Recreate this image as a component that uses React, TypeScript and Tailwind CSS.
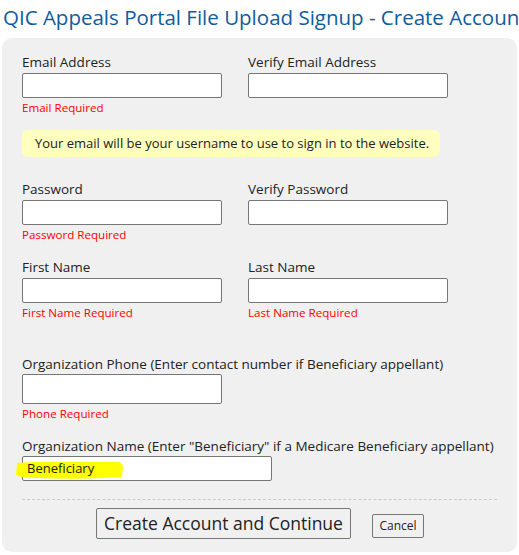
import React from "react";

const font = { fontFamily: '"Open Sans", "Noto Sans", sans-serif' };

function Field({ label, error, wide }: { label: string; error?: string; wide?: boolean }) {
  return (
    <div className="flex flex-col">
      <div className="text-[13.5px] leading-[18px] text-[#222]">{label}</div>
      <div className={`mt-[2px] h-[25px] ${wide ? "w-[250px]" : "w-[200px]"} border border-[#767676] rounded-[2px] bg-white`} />
      {error ? (
        <div className="mt-[2px] text-[11.6px] leading-[16px] text-[#ff0000]">{error}</div>
      ) : (
        <div className="mt-[2px] h-[16px]" />
      )}
    </div>
  );
}

export default function App() {
  return (
    <div className="w-[519px] h-[555px] overflow-hidden bg-white" style={font}>
      <h1 className="whitespace-nowrap pl-[3px] pt-[2px] text-[20.5px] leading-[30px] text-[#0e5c9e]">
        QIC Appeals Portal File Upload Signup - Create Account
      </h1>
      <div className="mt-[6px] mx-[2px] h-[514px] rounded-[10px] bg-[#f0f0f0] pl-[20px] pr-[20px] pt-[15px]">
        <div className="grid grid-cols-[226px_226px]">
          <Field label="Email Address" error="Email Required" />
          <Field label="Verify Email Address" />
        </div>
        <div className="mt-[14px] w-[418px] h-[27px] rounded-[6px] bg-[#ffffbe] pl-[13px] text-[13px] leading-[27px] text-[#222]">
          Your email will be your username to use to sign in to the website.
        </div>
        <div className="mt-[23px] grid grid-cols-[226px_226px]">
          <Field label="Password" error="Password Required" />
          <Field label="Verify Password" />
        </div>
        <div className="mt-[15px] grid grid-cols-[226px_226px]">
          <Field label="First Name" error="First Name Required" />
          <Field label="Last Name" error="Last Name Required" />
        </div>
        <div className="mt-[34px] flex flex-col">
          <div className="text-[13.5px] leading-[18px] text-[#222]">
            Organization Phone (Enter contact number if Beneficiary appellant)
          </div>
          <div className="mt-[1px] h-[30px] w-[200px] border border-[#767676] rounded-[2px] bg-white" />
          <div className="mt-[2px] text-[11.6px] leading-[16px] text-[#ff0000]">Phone Required</div>
        </div>
        <div className="mt-[15px] flex flex-col">
          <div className="text-[13.5px] leading-[18px] text-[#222] whitespace-nowrap">
            Organization Name (Enter "Beneficiary" if a Medicare Beneficiary appellant)
          </div>
          <div className="relative mt-[1px] h-[25px] w-[250px] border border-[#767676] rounded-[2px] bg-white">
            <svg className="absolute left-[-8px] top-[3px]" width="110" height="20" viewBox="0 0 110 20">
              <path
                d="M2 3 C20 1 60 2 104 2 L108 5 L107 17 C80 19 50 19 20 18 C10 18 4 17 1 15 Z"
                fill="#ffff00"
              />
            </svg>
            <div className="relative pl-[4px] text-[13px] leading-[23px] text-[#1a2200]">Beneficiary</div>
          </div>
        </div>
        <div className="mt-[18px] border-t border-dashed border-[#cccccc] w-[475px]" />
        <div className="mt-[8px] flex items-start">
          <button className="ml-[74px] h-[31px] w-[255px] border border-[#767676] rounded-[2px] bg-[#f0f0f0] text-[17.5px] leading-[29px] text-[#222]">
            Create Account and Continue
          </button>
          <button className="ml-[21px] mt-[6px] h-[24px] w-[52px] border border-[#767676] rounded-[2px] bg-[#f0f0f0] text-[12px] leading-[22px] text-[#222]">
            Cancel
          </button>
        </div>
      </div>
    </div>
  );
}
